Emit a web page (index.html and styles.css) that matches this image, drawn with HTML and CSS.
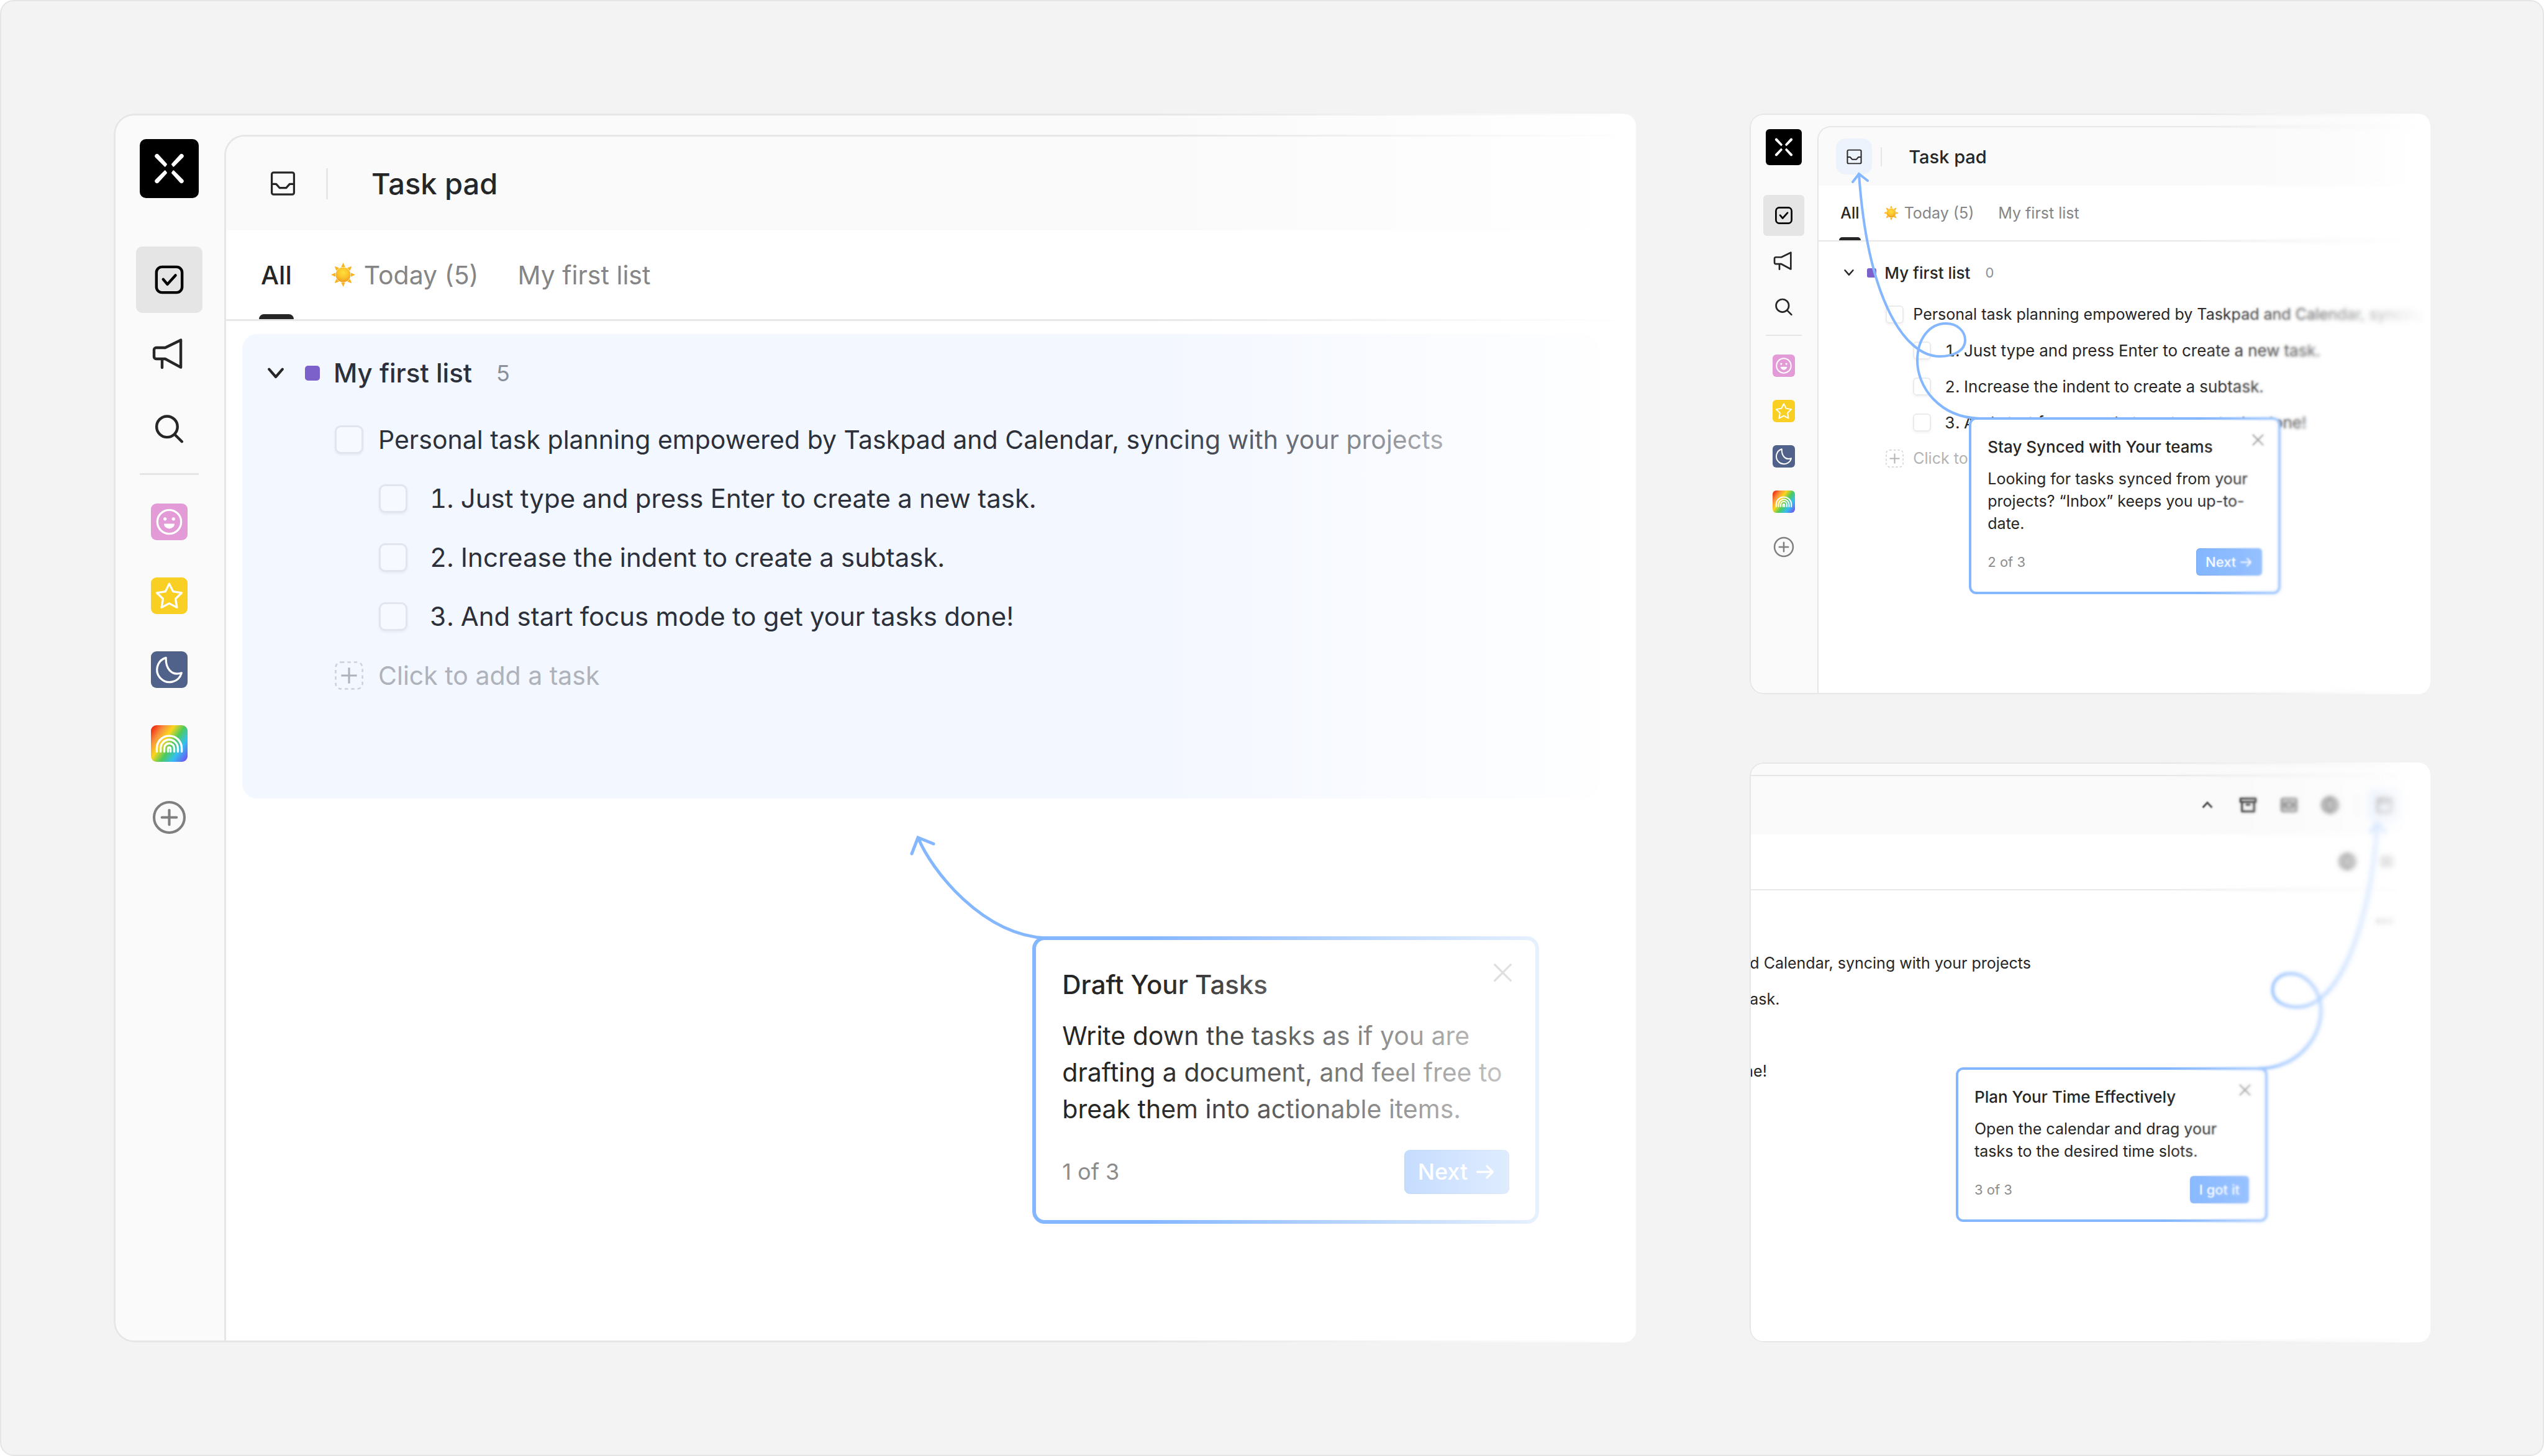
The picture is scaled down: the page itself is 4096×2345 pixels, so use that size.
FILE: index.html
```html
<!DOCTYPE html>
<html lang="en">
<head>
<meta charset="utf-8">
<title>Task pad onboarding</title>
<link rel="stylesheet" href="styles.css">
</head>
<body>
<svg class="sprite" aria-hidden="true">
  <defs>
    <radialGradient id="sun-fill" cx="0.5" cy="0.35" r="0.65">
      <stop offset="0" stop-color="#fde13a"/>
      <stop offset="0.6" stop-color="#fbc02b"/>
      <stop offset="1" stop-color="#ef9a1a"/>
    </radialGradient>
  </defs>
  <symbol id="i-logo" viewBox="0 0 32 32">
    <g fill="#fff">
      <path id="blade" d="M8.5 10a1.15 1.15 0 0 1 1.7-1.6l4.5 5a.5.5 0 0 1 0 .6l-.6.8a.5.5 0 0 1-.8 0z"/>
      <use href="#blade" transform="matrix(-1 0 0 1 32 0)"/>
      <use href="#blade" transform="matrix(1 0 0 -1 0 32)"/>
      <use href="#blade" transform="matrix(-1 0 0 -1 32 32)"/>
    </g>
  </symbol>
  <symbol id="i-check" viewBox="0 0 20 20">
    <g fill="none" stroke="#000" stroke-linecap="round" stroke-linejoin="round">
      <rect x="3" y="3" width="14" height="14" rx="3" stroke-width="1.5"/>
      <path d="M6.7 9.8l2.3 2.7 4.4-4.9" stroke-width="1.5"/>
    </g>
  </symbol>
  <symbol id="i-horn" viewBox="0 0 20 20">
    <path d="M16.3 2.6v14.9l-8.500-4.600H2.900A1.200 1.200 0 0 1 1.700 11.700V8a1.200 1.200 0 0 1 1.200-1.200h4.900zM6.100 12.900v4.700" fill="none" stroke="#262626" stroke-width="1.500" stroke-linejoin="round" stroke-linecap="round"/>
  </symbol>
  <symbol id="i-search" viewBox="0 0 20 20">
    <path d="M8.800 3.900a5.700 5.700 0 1 0 0 11.400a5.700 5.700 0 0 0 0-11.400zM13 13.800l3.900 3.900" fill="none" stroke="#262626" stroke-width="1.500" stroke-linecap="round"/>
  </symbol>
  <symbol id="i-smile" viewBox="0 0 20 20">
    <circle cx="10" cy="10" r="6.500" fill="none" stroke="#fff" stroke-width="1.100"/>
    <circle cx="7.700" cy="8.400" r="0.900" fill="#fff"/>
    <circle cx="12.300" cy="8.400" r="0.900" fill="#fff"/>
    <path d="M7.100 11h5.800a2.900 2.700 0 0 1-5.800 0z" fill="#fff"/>
  </symbol>
  <symbol id="i-star" viewBox="0 0 20 20">
    <path d="M10 3.500l2.100 4.200 4.700.7-3.400 3.300.8 4.700-4.200-2.200-4.200 2.200.8-4.700-3.400-3.300 4.700-.7z" fill="none" stroke="#fff" stroke-width="1.100" stroke-linejoin="round"/>
  </symbol>
  <symbol id="i-moon" viewBox="0 0 20 20">
    <path d="M8.200 3.500A6.800 6.800 0 1 0 16.700 11.800C14 12.700 11.700 12.100 10.200 10.400C8.500 8.500 8.100 6 8.200 3.500z" fill="none" stroke="#fff" stroke-width="1.100" stroke-linejoin="round"/>
  </symbol>
  <symbol id="i-rainbow" viewBox="0 0 20 20">
    <g fill="none" stroke="#fff" stroke-width="1.150" stroke-linecap="round">
      <path d="M3.200 14.400v-1.800a6.800 6.800 0 0 1 13.600 0v1.800"/>
      <path d="M5.300 14.400v-1.800a4.700 4.700 0 0 1 9.400 0v1.800"/>
      <path d="M7.300 14.400v-1.800a2.700 2.700 0 0 1 5.400 0v1.800"/>
      <path d="M9.300 14.400v-1.600a.7.7 0 0 1 1.400 0v1.600"/>
    </g>
  </symbol>
  <symbol id="i-plus-circle" viewBox="0 0 20 20">
    <path d="M10 1.700a8.300 8.300 0 1 0 0 16.600a8.300 8.300 0 0 0 0-16.600zM10 6v8M6 10h8" fill="none" stroke="#7f7f7f" stroke-width="1.400" stroke-linecap="round"/>
  </symbol>
  <symbol id="i-inbox" viewBox="0 0 16 16">
    <path d="M2.900 2h10.200a1 1 0 0 1 1 1v10a1 1 0 0 1-1 1H2.900a1 1 0 0 1-1-1V3a1 1 0 0 1 1-1zM2 8.300h2.300l1.900 2.100h3.600l1.900-2.100H14" fill="none" stroke="#262626" stroke-width="1.100" stroke-linejoin="round"/>
  </symbol>
  <symbol id="i-sun" viewBox="0 0 16 16">
    <g fill="#f9b41e">
      <path id="ray" d="M8 0l1.300 2.900H6.700z"/>
      <use href="#ray" transform="rotate(45 8 8)"/>
      <use href="#ray" transform="rotate(90 8 8)"/>
      <use href="#ray" transform="rotate(135 8 8)"/>
      <use href="#ray" transform="rotate(180 8 8)"/>
      <use href="#ray" transform="rotate(225 8 8)"/>
      <use href="#ray" transform="rotate(270 8 8)"/>
      <use href="#ray" transform="rotate(315 8 8)"/>
    </g>
    <circle cx="8" cy="8" r="4.900" fill="url(#sun-fill)"/>
  </symbol>
  <symbol id="i-chevron" viewBox="0 0 10 10">
    <path d="M1.400 2.900L5 7l3.600-4.100" fill="none" stroke="#262626" stroke-width="1.400" stroke-linecap="round" stroke-linejoin="round"/>
  </symbol>
  <symbol id="i-up" viewBox="0 0 10 10">
    <path d="M1.300 6.800L5 2.900l3.700 3.900" fill="none" stroke="#3c3c3c" stroke-width="1.500"/>
  </symbol>
  <symbol id="i-close" viewBox="0 0 16 16">
    <path d="M3.300 3.300l9.400 9.400M12.700 3.300l-9.400 9.400" fill="none" stroke="#8c8c8c" stroke-width="1.100"/>
  </symbol>
  <symbol id="i-next" viewBox="0 0 12 12">
    <path d="M1.300 6h9M6.900 2.600L10.300 6 6.900 9.400" fill="none" stroke="#fff" stroke-width="1.200" stroke-linecap="round" stroke-linejoin="round"/>
  </symbol>
  <symbol id="i-add" viewBox="0 0 16 16">
    <rect x="0.500" y="0.500" width="15" height="15" rx="3" fill="none" stroke="currentColor" stroke-opacity="0.550" stroke-width="0.900" stroke-dasharray="1.900 1.700"/>
    <path d="M8 3.600v8.800M3.600 8h8.800" stroke="currentColor" stroke-width="1.100"/>
  </symbol>
  <symbol id="i-archive" viewBox="0 0 16 16">
    <path d="M1.300 2.300h13.400v3H1.300zM2.600 5.300h10.800v8.400H2.600zM6 7.800h4" fill="none" stroke="#222" stroke-width="1.800" stroke-linejoin="round"/>
  </symbol>
  <symbol id="i-card" viewBox="0 0 16 16">
    <path d="M2.500 2.500h11a1 1 0 0 1 1 1v9a1 1 0 0 1-1 1h-11a1 1 0 0 1-1-1v-9a1 1 0 0 1 1-1zM6 5.500h4v5H6zM3.800 5v6M12.200 5v6" fill="none" stroke="#333" stroke-width="1.400"/>
  </symbol>
  <symbol id="i-globe" viewBox="0 0 16 16">
    <path d="M8 1a7 7 0 1 0 0 14a7 7 0 0 0 0-14zM8 1.400c-4 4-4 9.200 0 13.200c4-4 4-9.200 0-13.200zM1.400 8h13.200M2.500 4.800h11M2.500 11.200h11" fill="none" stroke="#333" stroke-width="1.400"/>
  </symbol>
  <symbol id="i-calendar" viewBox="0 0 16 16">
    <path d="M2.800 2.400h10.400a1 1 0 0 1 1 1v9.800a1 1 0 0 1-1 1H2.800a1 1 0 0 1-1-1V3.400a1 1 0 0 1 1-1zM2 5.500h12M5 1v3M11 1v3" fill="none" stroke="#222" stroke-width="1.900"/>
  </symbol>
  <symbol id="i-lines" viewBox="0 0 16 16">
    <path d="M2.500 4.500h11M2.500 8h11M2.500 11.500h11" fill="none" stroke="#444" stroke-width="1.900"/>
  </symbol>
  <symbol id="i-dots" viewBox="0 0 16 16">
    <g fill="#333"><circle cx="2.500" cy="8" r="1.600"/><circle cx="8" cy="8" r="1.600"/><circle cx="13.500" cy="8" r="1.600"/></g>
  </symbol>
</svg>

<main class="stage">
  <section class="frame frame-main large" aria-label="Draft your tasks">
    <nav class="rail" aria-label="Workspace">
      <a class="logo" href="#" aria-label="Home"><svg><use href="#i-logo"/></svg></a>
      <a class="rail-item active" href="#" aria-label="Tasks"><svg><use href="#i-check"/></svg></a>
      <a class="rail-item" href="#" aria-label="Announcements"><svg><use href="#i-horn"/></svg></a>
      <a class="rail-item" href="#" aria-label="Search"><svg><use href="#i-search"/></svg></a>
      <hr>
      <a class="rail-item" href="#" aria-label="Smile project"><svg class="chip pink"><use href="#i-smile"/></svg></a>
      <a class="rail-item" href="#" aria-label="Star project"><svg class="chip yellow"><use href="#i-star"/></svg></a>
      <a class="rail-item" href="#" aria-label="Moon project"><svg class="chip navy"><use href="#i-moon"/></svg></a>
      <a class="rail-item" href="#" aria-label="Rainbow project"><svg class="chip rainbow"><use href="#i-rainbow"/></svg></a>
      <a class="rail-item" href="#" aria-label="Add project"><svg class="add"><use href="#i-plus-circle"/></svg></a>
    </nav>
    <div class="work">
      <header class="bar">
        <button class="icon-btn" type="button" aria-label="Inbox"><svg><use href="#i-inbox"/></svg></button>
        <span class="sep"></span>
        <h1>Task pad</h1>
      </header>
      <div class="tabs">
        <a class="tab current" href="#">All</a>
        <a class="tab" href="#"><svg><use href="#i-sun"/></svg>Today (5)</a>
        <a class="tab" href="#">My first list</a>
      </div>
      <div class="list tinted">
        <div class="list-head">
          <button class="fold" type="button" aria-label="Collapse"><svg><use href="#i-chevron"/></svg></button>
          <span class="swatch"></span>
          <h2>My first list</h2>
          <span class="count">5</span>
        </div>
        <label class="task"><input type="checkbox"><span>Personal task planning empowered by Taskpad and Calendar, syncing with your projects</span></label>
        <label class="task sub"><input type="checkbox"><span>1. Just type and press Enter to create a new task.</span></label>
        <label class="task sub"><input type="checkbox"><span>2. Increase the indent to create a subtask.</span></label>
        <label class="task sub"><input type="checkbox"><span>3. And start focus mode to get your tasks done!</span></label>
        <button class="task new" type="button"><svg><use href="#i-add"/></svg><span>Click to add a task</span></button>
      </div>
    </div>
    <div class="tip tip-draft" role="dialog" aria-label="Draft Your Tasks">
      <h3>Draft Your Tasks</h3>
      <p>Write down the tasks as if you are drafting a document, and feel free to break them into actionable items.</p>
      <div class="tip-foot">
        <span>1 of 3</span>
        <button class="go" type="button">Next<svg><use href="#i-next"/></svg></button>
      </div>
      <button class="close" type="button" aria-label="Close"><svg><use href="#i-close"/></svg></button>
      <svg class="arrow arrow-draft" viewBox="0 0 225 172"><path d="M222 167C118 162 37 58 15 5M5 31L15 5L40 15"/></svg>
    </div>
    <div class="veil"></div>
  </section>

  <section class="frame small" aria-label="Stay synced">
    <nav class="rail" aria-label="Workspace">
      <a class="logo" href="#" aria-label="Home"><svg><use href="#i-logo"/></svg></a>
      <a class="rail-item active" href="#" aria-label="Tasks"><svg><use href="#i-check"/></svg></a>
      <a class="rail-item" href="#" aria-label="Announcements"><svg><use href="#i-horn"/></svg></a>
      <a class="rail-item" href="#" aria-label="Search"><svg><use href="#i-search"/></svg></a>
      <hr>
      <a class="rail-item" href="#" aria-label="Smile project"><svg class="chip pink"><use href="#i-smile"/></svg></a>
      <a class="rail-item" href="#" aria-label="Star project"><svg class="chip yellow"><use href="#i-star"/></svg></a>
      <a class="rail-item" href="#" aria-label="Moon project"><svg class="chip navy"><use href="#i-moon"/></svg></a>
      <a class="rail-item" href="#" aria-label="Rainbow project"><svg class="chip rainbow"><use href="#i-rainbow"/></svg></a>
      <a class="rail-item" href="#" aria-label="Add project"><svg class="add"><use href="#i-plus-circle"/></svg></a>
    </nav>
    <div class="work">
      <header class="bar">
        <button class="icon-btn lit" type="button" aria-label="Inbox"><svg><use href="#i-inbox"/></svg></button>
        <span class="sep"></span>
        <h1>Task pad</h1>
      </header>
      <div class="tabs">
        <a class="tab current" href="#">All</a>
        <a class="tab" href="#"><svg><use href="#i-sun"/></svg>Today (5)</a>
        <a class="tab" href="#">My first list</a>
      </div>
      <div class="list">
        <div class="list-head">
          <button class="fold" type="button" aria-label="Collapse"><svg><use href="#i-chevron"/></svg></button>
          <span class="swatch"></span>
          <h2>My first list</h2>
          <span class="count">0</span>
        </div>
        <label class="task"><input type="checkbox"><span>Personal task planning empowered by Taskpad and Calendar, syncing</span></label>
        <label class="task sub"><input type="checkbox"><span>1. Just type and press Enter to create a new task.</span></label>
        <label class="task sub"><input type="checkbox"><span>2. Increase the indent to create a subtask.</span></label>
        <label class="task sub"><input type="checkbox"><span>3. And start focus mode to get your tasks done!</span></label>
        <button class="task new" type="button"><svg><use href="#i-add"/></svg><span>Click to add a task</span></button>
      </div>
    </div>
    <div class="tip tip-sync" role="dialog" aria-label="Stay Synced with Your teams">
      <h3>Stay Synced with Your teams</h3>
      <p>Looking for tasks synced from your projects? “Inbox” keeps you up-to-date.</p>
      <div class="tip-foot">
        <span>2 of 3</span>
        <button class="go" type="button">Next<svg><use href="#i-next"/></svg></button>
      </div>
      <button class="close" type="button" aria-label="Close"><svg><use href="#i-close"/></svg></button>
    </div>
    <svg class="arrow arrow-sync" viewBox="0 0 400 500"><path d="M370 491C305 489 270 440 270 398C270 362 290 338 316 338C334 338 347 350 347 365C347 382 328 391 306 391C250 391 190 300 176 97M166 110L176 97L190 108"/></svg>
    <div class="haze h1"></div><div class="haze h2"></div><div class="haze h3"></div><div class="haze h4"></div>
    <div class="veil"></div>
  </section>

  <section class="frame small tail" aria-label="Plan your time">
    <div class="work">
      <header class="bar">
        <button class="icon-btn" type="button" aria-label="Fold"><svg class="mini"><use href="#i-up"/></svg></button>
        <button class="icon-btn" type="button" aria-label="Archive"><svg><use href="#i-archive"/></svg></button>
        <button class="icon-btn" type="button" aria-label="Card"><svg><use href="#i-card"/></svg></button>
        <button class="icon-btn" type="button" aria-label="Language"><svg><use href="#i-globe"/></svg></button>
        <span class="sep"></span>
        <button class="icon-btn lit" type="button" aria-label="Calendar"><svg><use href="#i-calendar"/></svg></button>
      </header>
      <div class="tabs">
        <button class="icon-btn" type="button" aria-label="Filter"><svg><use href="#i-globe"/></svg></button>
        <button class="icon-btn" type="button" aria-label="Sort"><svg><use href="#i-lines"/></svg></button>
      </div>
      <div class="list">
        <div class="list-head">
          <button class="icon-btn" type="button" aria-label="More"><svg><use href="#i-dots"/></svg></button>
        </div>
        <div class="task"><span>d Calendar, syncing with your projects</span></div>
        <div class="task"><span>ask.</span></div>
        <div class="task"></div>
        <div class="task cut"><span>ne!</span></div>
      </div>
    </div>
    <div class="tip tip-plan" role="dialog" aria-label="Plan Your Time Effectively">
      <h3>Plan Your Time Effectively</h3>
      <p>Open the calendar and drag your tasks to the desired time slots.</p>
      <div class="tip-foot">
        <span>3 of 3</span>
        <button class="go" type="button">I got it</button>
      </div>
      <button class="close" type="button" aria-label="Close"><svg><use href="#i-close"/></svg></button>
    </div>
    <svg class="arrow arrow-plan" viewBox="0 0 1096 500"><path d="M820 493C880 493 920 445 920 400C920 365 895 340 871 340C853 340 842 352 842 366C842 384 860 394 882 394C950 394 1000 260 1011 98M1000 112L1011 98L1024 113"/></svg>
    <div class="haze h1"></div><div class="haze h2"></div><div class="haze h3"></div><div class="haze h4"></div>
    <div class="veil"></div>
  </section>
</main>
</body>
</html>
```
FILE: styles.css
```css
* { box-sizing: border-box; margin: 0; padding: 0; }

body {
  background: #fff;
  color: #262626;
  font-family: Inter, "Liberation Sans", sans-serif;
}

button {
  background: none;
  border: 0;
  color: inherit;
  font: inherit;
}

a { color: inherit; text-decoration: none; }
svg { display: block; flex: none; }
.sprite { position: absolute; width: 0; height: 0; }

.stage {
  display: grid;
  grid-template-columns: 2452fr 1096fr;
  grid-template-rows: 1fr 1fr;
  gap: 110px 183px;
  min-height: 100vh;
  padding: 181px;
  background: #f3f3f3;
  border: 2px solid #e5e5e5;
  border-radius: 22px;
}

/* Two sizes of the same app window share these measures. */
.large {
  --line: 3px;
  --text: 41px;
  --text-wide: 42px;
  --title: 47px;
  --note: 36px;
  --lead: 59px;
  --corner: 33px;
  --rail: 178px;
  --logo: 95px;
  --logo-top: 41px;
  --logo-gap: 78px;
  --item: 107px;
  --item-gap: 12px;
  --icon: 59px;
  --rule-top: 20px;
  --rule-bottom: 22px;
  --bar-top: 34px;
  --bar: 151px;
  --tabs: 146px;
  --bar-pad: 44px;
  --btn: 95px;
  --btn-icon: 47px;
  --sep: 50px;
  --sep-left: 22px;
  --sep-right: 70px;
  --tab-pad: 53px;
  --tab-gap: 57px;
  --tab-side: 3px;
  --tab-mark: 8px;
  --sun: 39px;
  --sun-gap: 14px;
  --row: 95px;
  --head-gap: 12px;
  --box: 46px;
  --box-line: 3px;
  --box-corner: 10px;
  --box-gap: 24px;
  --sub-gap: 36px;
  --indent: 71px;
  --swatch: 24px;
  --swatch-corner: 5px;
  --swatch-left: 32px;
  --swatch-right: 22px;
  --chevron: 30px;
  --count-gap: 39px;
  --tip-line: 6px;
  --tip-corner: 20px;
  --tip-pad: 42px;
  --tip-gap: 24px;
  --foot-gap: 36px;
  --go: 71px;
  --go-pad: 22px;
  --go-gap: 12px;
  --go-icon: 33px;
  --go-corner: 9px;
  --close: 47px;
  --close-at: 29px;
}

.small {
  --line: 2px;
  --text: 25px;
  --text-wide: 26px;
  --title: 29px;
  --note: 22px;
  --lead: 36px;
  --corner: 22px;
  --rail: 109px;
  --logo: 58px;
  --logo-top: 25px;
  --logo-gap: 48px;
  --item: 66px;
  --item-gap: 7px;
  --icon: 36px;
  --rule-top: 13px;
  --rule-bottom: 15px;
  --bar-top: 20px;
  --bar: 94px;
  --tabs: 90px;
  --bar-pad: 28px;
  --btn: 58px;
  --btn-icon: 29px;
  --sep: 31px;
  --sep-left: 14px;
  --sep-right: 43px;
  --tab-pad: 33px;
  --tab-gap: 35px;
  --tab-side: 2px;
  --tab-mark: 5px;
  --sun: 24px;
  --sun-gap: 9px;
  --row: 58px;
  --head-gap: 9px;
  --box: 29px;
  --box-line: 2px;
  --box-corner: 6px;
  --box-gap: 15px;
  --sub-gap: 22px;
  --indent: 44px;
  --swatch: 15px;
  --swatch-corner: 3px;
  --swatch-left: 20px;
  --swatch-right: 13px;
  --chevron: 18px;
  --count-gap: 24px;
  --tip-line: 4px;
  --tip-corner: 12px;
  --tip-pad: 26px;
  --tip-gap: 15px;
  --foot-gap: 22px;
  --go: 44px;
  --go-pad: 15px;
  --go-gap: 6px;
  --go-icon: 21px;
  --go-corner: 6px;
  --close: 29px;
  --close-at: 18px;
}

.frame {
  position: relative;
  display: flex;
  overflow: hidden;
  background: #fafafa;
  border-radius: var(--corner) 20px 20px var(--corner);
  font-size: var(--text);
}
.frame-main { grid-row: span 2; }
.frame::before {
  content: "";
  position: absolute;
  inset: 0;
  z-index: 1;
  border: var(--line) solid #e6e6e6;
  border-radius: inherit;
  pointer-events: none;
}

/* Left rail */
.rail {
  display: flex;
  flex: none;
  flex-direction: column;
  align-items: center;
  gap: var(--item-gap);
  width: var(--rail);
  padding-top: var(--logo-top);
}
.logo {
  width: var(--logo);
  height: var(--logo);
  margin-bottom: calc(var(--logo-gap) - var(--item-gap));
  background: #000;
  border-radius: var(--box-corner);
}
.logo svg { width: 100%; height: 100%; }
.rail-item {
  display: grid;
  place-items: center;
  width: var(--item);
  height: var(--item);
  border-radius: var(--box-corner);
}
.rail-item.active { background: #e5e5e5; }
.rail-item svg { width: var(--icon); height: var(--icon); }
.rail hr {
  width: var(--logo);
  height: var(--line);
  margin: calc(var(--rule-top) - var(--item-gap)) 0 calc(var(--rule-bottom) - var(--item-gap));
  background: #e5e5e5;
  border: 0;
}
.chip { border-radius: var(--go-corner); }
.pink { background: #e29bd6; }
.yellow { background: #f9cf23; }
.navy { background: #506289; }
.rainbow { background: linear-gradient(125deg, #f0250e 4%, #f7913d 22%, #fbd51e 38%, #4ccb5c 56%, #34c0f0 74%, #6a5cf5 94%); }

/* Work area */
.work {
  flex: 1;
  min-width: 0;
  margin-top: var(--bar-top);
  background: #fff;
  border: solid #e6e6e6;
  border-width: var(--line) 0 0 var(--line);
  border-top-left-radius: var(--corner);
  overflow: hidden;
}
.bar {
  display: flex;
  align-items: center;
  height: var(--bar);
  padding-left: var(--bar-pad);
  background: #fafafa;
}
.bar h1 { font-size: var(--title); font-weight: 500; white-space: nowrap; }
.icon-btn {
  display: grid;
  place-items: center;
  width: var(--btn);
  height: var(--btn);
  border-radius: 15px;
}
.icon-btn svg { width: var(--btn-icon); height: var(--btn-icon); }
.icon-btn .mini { width: 20px; height: 20px; }
.icon-btn.lit { background: #edf3fd; }
.sep {
  width: var(--line);
  height: var(--sep);
  margin: 0 var(--sep-right) 0 var(--sep-left);
  background: #e6e6e6;
}
.tabs {
  display: flex;
  gap: var(--tab-gap);
  height: var(--tabs);
  padding-left: var(--tab-pad);
  border-bottom: var(--line) solid #e8e8e8;
}
.tab {
  display: flex;
  align-items: center;
  gap: var(--sun-gap);
  padding: 0 var(--tab-side);
  color: #858585;
  white-space: nowrap;
}
.tab svg { width: var(--sun); height: var(--sun); }
.tab.current {
  position: relative;
  color: #262626;
  font-weight: 500;
}
.tab.current::after {
  content: "";
  position: absolute;
  right: 0;
  bottom: 0;
  left: 0;
  height: var(--tab-mark);
  background: #262626;
  border-radius: var(--tab-mark) var(--tab-mark) 0 0;
}

/* Task list */
.list { padding: 21px 0 0 40px; }
.list.tinted {
  margin: 21px 60px 0 26px;
  padding: 15px 0 151px 39px;
  background: #f3f7ff;
  border-radius: 24px;
  color: #2b303b;
}
.list-head {
  display: flex;
  align-items: center;
  height: var(--row);
  margin-bottom: var(--head-gap);
}
.list-head h2 { font-size: var(--text-wide); font-weight: 500; white-space: nowrap; }
.fold svg { width: var(--chevron); height: var(--chevron); }
.swatch {
  width: var(--swatch);
  height: var(--swatch);
  margin: 0 var(--swatch-right) 0 var(--swatch-left);
  background: #7b61c9;
  border-radius: var(--swatch-corner);
}
.count {
  margin-left: var(--count-gap);
  color: #8b8f98;
  font-size: var(--note);
}
.task {
  display: flex;
  align-items: center;
  gap: var(--box-gap);
  height: var(--row);
  padding-left: 68px;
  white-space: nowrap;
}
.tinted .task { padding-left: 110px; }
.task.sub {
  gap: var(--sub-gap);
  margin-left: var(--indent);
  font-size: var(--text-wide);
  font-variant-numeric: tabular-nums;
}
.task input {
  flex: none;
  width: var(--box);
  height: var(--box);
  appearance: none;
  background: #fff;
  border: var(--box-line) solid #ebebeb;
  border-radius: var(--box-corner);
  box-shadow: 0 2px 4px rgb(0 0 0 / 6%);
}
.tinted .task input {
  background: #f6f9ff;
  border-color: #e1e5ee;
}
.task.new { color: #b3b3b3; }
.tinted .task.new { color: #aeb2bb; }
.task.new svg { width: var(--box); height: var(--box); }

/* Coach marks */
.tip {
  position: absolute;
  padding: var(--tip-pad);
  background: #fff;
  border: var(--tip-line) solid #85b7ff;
  border-radius: var(--tip-corner);
  line-height: var(--lead);
}
.tip h3 {
  margin-bottom: var(--tip-gap);
  font-size: var(--text-wide);
  font-weight: 500;
}
.tip p { margin-bottom: var(--foot-gap); }
.tip-foot {
  display: flex;
  align-items: center;
  justify-content: space-between;
  color: #8c8c8c;
  font-size: var(--note);
}
.go {
  display: flex;
  align-items: center;
  gap: var(--go-gap);
  height: var(--go);
  padding: 0 var(--go-pad);
  background: #85b7ff;
  border-radius: var(--go-corner);
  box-shadow: inset 0 0 2px rgb(40 90 180 / 40%);
  color: #fff;
  font-weight: 500;
}
.go svg { width: var(--go-icon); height: var(--go-icon); }
.close {
  position: absolute;
  top: var(--close-at);
  right: var(--close-at);
}
.close svg { width: var(--close); height: var(--close); }
.tip-draft { top: 1325px; right: 156px; width: 816px; }
.tip-sync { top: 489px; left: 353px; width: 502px; }
.tip-plan { top: 491px; right: 262px; width: 502px; }

.arrow {
  position: absolute;
  fill: none;
  stroke: #85b7ff;
  stroke-linecap: round;
  stroke-linejoin: miter;
}
.arrow-draft { top: -170px; left: -205px; width: 225px; height: 172px; stroke-width: 5px; }
.arrow-sync { top: 0; left: 0; width: 400px; height: 500px; stroke-width: 4px; }
.arrow-plan { top: 0; right: 0; width: 1096px; height: 500px; stroke-width: 5px; }

/* Right-hand part of the window, scrolled past its rail */
.tail .work { border-left: 0; border-top-left-radius: 0; }
.tail .bar, .tail .tabs {
  align-items: center;
  justify-content: flex-end;
  padding: 0 44px 0 0;
  gap: 8px;
}
.tail .tabs { padding-right: 40px; gap: 6px; }
.tail .sep { margin: 0 6px; }
.tail .lit { background: #dfeafd; }
.tail .list { padding-left: 0; }
.tail .list-head { justify-content: flex-end; padding-right: 44px; }
.tail .task { padding-left: 0; }
.tail .cut { text-indent: -9px; }

/* Progressive blur, then a fade to white */
.haze, .veil {
  position: absolute;
  top: 0;
  right: 0;
  bottom: 0;
  z-index: 2;
  pointer-events: none;
}
.haze { width: 34%; }
.tail .haze { width: 39%; }
.h1 { backdrop-filter: blur(1px); mask-image: linear-gradient(90deg, transparent 0, #000 20%); }
.h2 { backdrop-filter: blur(2px); mask-image: linear-gradient(90deg, transparent 15%, #000 45%); }
.h3 { backdrop-filter: blur(2px); mask-image: linear-gradient(90deg, transparent 40%, #000 65%); }
.h4 { backdrop-filter: blur(4px); mask-image: linear-gradient(90deg, transparent 55%, #000 95%); }
.veil {
  width: 34%;
  background: linear-gradient(90deg, rgb(255 255 255 / 0%), rgb(255 255 255 / 20%) 40%, rgb(255 255 255 / 62%) 78%, #fff 98%);
}
.large .veil {
  width: 32%;
  background: linear-gradient(90deg, rgb(255 255 255 / 0%), #fff);
}
.tail .veil { width: 39%; }
```
